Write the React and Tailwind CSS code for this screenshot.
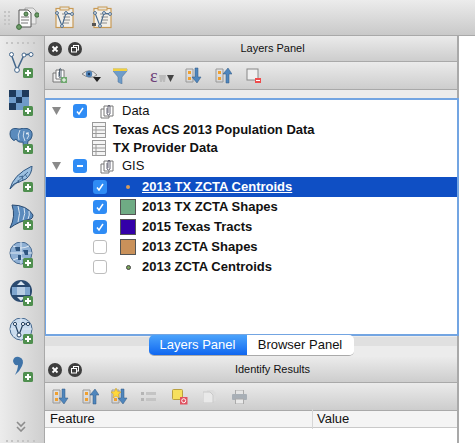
const font = "[font-family:'Liberation_Sans',Arial,sans-serif]";

const PlusBadge = () => (
  <g transform="translate(14 16)">
    <rect width="10" height="10" rx="1.5" fill="#4f8f4f" />
    <path d="M5 2v6M2 5h6" stroke="#fff" strokeWidth="2" />
  </g>
);

const DockIcon = ({ children }) => (
  <svg width="26" height="26" viewBox="0 0 26 26">
    {children}
    <PlusBadge />
  </svg>
);

const Globe = ({ fill = "#8fb0d4", dark = "#47698f" }) => (
  <>
    <circle cx="12" cy="11" r="11" fill={fill} stroke={dark} strokeWidth="1" />
    <path d="M1 11h22M12 0v22M4 4q8 4 16 0M4 18q8-4 16 0" stroke="#dce7f2" strokeWidth="1" fill="none" />
  </>
);

const DockIcons = () => (
  <div className="flex flex-col items-start gap-[12px] pt-[16px] pl-[9px]">
    <DockIcon>
      <path d="M2 2L8 18L15 3L22 2" stroke="#45688c" strokeWidth="1.5" fill="none" />
      <circle cx="2.5" cy="2.5" r="2" fill="#fff" stroke="#45688c" />
      <circle cx="8" cy="18" r="2.4" fill="#fff" stroke="#45688c" />
      <circle cx="15" cy="3" r="2" fill="#fff" stroke="#45688c" />
      <circle cx="22" cy="2.5" r="2" fill="#fff" stroke="#45688c" />
    </DockIcon>
    <DockIcon>
      <rect x="0" y="0" width="20" height="20" fill="#6f9bc9" />
      <path d="M0 0h7v7H0zM13 0h7v7h-7zM7 7h6v6H7zM0 13h7v7H0z" fill="#1e3a5c" />
    </DockIcon>
    <DockIcon>
      {/* elephant head, trunk hanging from the middle */}
      <path d="M1 6Q1 0 7 0.500Q9 1 11 1Q14-0.500 18 0.500Q24 2 23 8Q22.500 12 19 13L18 20Q16 23 14.500 20L14 14Q9 15 7 11Q5 14 3 11Q1 9 1 6Z" fill="#5b8bbd" stroke="#2f5680" />
      <path d="M11 2Q8 7 10 12M15 3Q13 8 16 13M19 4Q21 8 18 11" stroke="#dce7f2" strokeWidth="0.9" fill="none" />
      <circle cx="18" cy="5.500" r="0.900" fill="#fff" />
    </DockIcon>
    <DockIcon>
      <path d="M1 23Q4 9 23 0Q23 8 17 13Q10 16 5 18Q3 20 1 23Z" fill="#9cc0e0" stroke="#2f5680" />
      <path d="M1 23L19 6M9 14l1 3M13 10l1 4M16 8l2 3M10 11l4-1" stroke="#2f5680" strokeWidth="0.8" fill="none" />
    </DockIcon>
    <DockIcon>
      <path d="M3 1Q18 1 24 11Q24 14 22 15Q10 17 1 24Q7 12 3 1Z" fill="#5b8bbd" stroke="#2a4a70" />
      <path d="M9 2Q12 9 9 18M15 4Q17 9 14 16M20 7Q21 11 19 15" stroke="#dce7f2" fill="none" />
    </DockIcon>
    <DockIcon>
      <Globe />
      <path d="M6 5h5v4H7zM14 8h5v5h-3zM9 13h3v5H9z" fill="#2f5680" />
    </DockIcon>
    <DockIcon>
      <circle cx="12" cy="11" r="11" fill="#2a4a70" />
      <path d="M3 7h18v8H3z" fill="#7fa6cf" />
      <path d="M8 7h8v8H8z" fill="#b7cde4" />
      <path d="M12 1l4 4H8zM12 21l4-4H8z" fill="#dce7f2" />
    </DockIcon>
    <DockIcon>
      <Globe fill="#c9dbee" />
      <path d="M6 6L10 17L14 6L19 6" stroke="#24405f" strokeWidth="1.2" fill="none" />
      <circle cx="6" cy="6" r="1.6" fill="#fff" stroke="#24405f" />
      <circle cx="10" cy="17" r="2" fill="#fff" stroke="#24405f" />
      <circle cx="14" cy="6" r="1.6" fill="#fff" stroke="#24405f" />
      <circle cx="19" cy="6" r="1.6" fill="#fff" stroke="#24405f" />
    </DockIcon>
    <DockIcon>
      <path d="M4 5Q5 0 10 1Q16 3 13 10Q11 15 6 19Q9 13 9 9Q5 10 4 5Z" fill="#3f73a8" />
    </DockIcon>
    <svg className="mt-[27px] ml-[7px]" width="10" height="11" viewBox="0 0 10 11">
      <path d="M1 1l4 4 4-4M1 6l4 4 4-4" stroke="#8c8c8c" strokeWidth="1.6" fill="none" />
    </svg>
  </div>
);

const Grip = ({ className }) => (
  <div className={`grid grid-cols-6 gap-[2px] w-[30px] ${className}`}>
    {[0, 1, 2, 3, 4, 5].map((i) => (
      <span key={i} className="w-[2px] h-[2px] bg-[#c4c4c4]" />
    ))}
  </div>
);

const Clipboard = ({ broken }) => (
  <svg width="22" height="24" viewBox="0 0 22 24">
    <rect x="2" y="2.5" width="17" height="19" fill="#f2efe8" stroke="#c89a55" strokeWidth="1.2" />
    <rect x="6" y="1" width="9" height="3" fill="#e9e4d8" stroke="#c89a55" />
    <path d="M8 8h8M9 11h7M9 14h7M9 17h6" stroke="#777" strokeWidth="0.8" />
    <path d="M3 7L8 20L12 7L18 8" stroke="#45688c" strokeWidth="1.1" fill="none" />
    <circle cx="3" cy="7" r="1.4" fill="#fff" stroke="#45688c" />
    <circle cx="8" cy="20" r="1.4" fill="#fff" stroke="#45688c" />
    <circle cx="12" cy="7" r="1.4" fill="#fff" stroke="#45688c" />
    <circle cx="18" cy="8" r="1.4" fill="#fff" stroke="#45688c" />
    {broken && <path d="M0 17h4v3H0z" fill="#555" />}
  </svg>
);

const TopToolbar = () => (
  <div className="h-[36px] flex items-center border-b border-[#a9a9a9] bg-gradient-to-b from-[#ececec] to-[#c9c9c9]">
    <div className="grid grid-cols-2 gap-[2px] ml-[4px] mr-[3px] w-[6px]">
      {[0, 1, 2, 3, 4, 5, 6, 7].map((i) => (
        <span key={i} className="w-[2px] h-[2px] bg-[#c4c4c4]" />
      ))}
    </div>
    <svg className="ml-[2px]" width="24" height="24" viewBox="0 0 24 24">
      <path d="M10 2h8l3 3v13H10z" fill="#e8e8e8" stroke="#aaa" />
      <path d="M4 4h9l3 3v14H4z" fill="#fbfbfb" stroke="#555" />
      <path d="M6 11h8M6 14h8M6 17h7" stroke="#555" strokeWidth="0.8" />
      <circle cx="4" cy="21" r="2.4" fill="#6d9b67" stroke="#3d6b3d" />
      <circle cx="11" cy="8" r="2" fill="#6d9b67" stroke="#3d6b3d" />
      <circle cx="22" cy="9" r="2.2" fill="#6d9b67" stroke="#3d6b3d" />
    </svg>
    <div className="ml-[15px]"><Clipboard /></div>
    <div className="ml-[16px]"><Clipboard broken /></div>
  </div>
);

const RoundButton = ({ children }) => (
  <span className="w-[14px] h-[14px] rounded-full bg-[#3e3e3e] flex items-center justify-center">
    {children}
  </span>
);

const PanelHeader = ({ title, className }) => (
  <div className={`flex items-center border-b border-[#a9a9a9] bg-gradient-to-b from-[#ebebeb] to-[#cdcdcd] pl-[3px] gap-[6px] ${className}`}>
    <RoundButton>
      <svg width="8" height="8" viewBox="0 0 8 8">
        <path d="M1.5 1.5l5 5M6.5 1.5l-5 5" stroke="#fff" strokeWidth="1.8" />
      </svg>
    </RoundButton>
    <RoundButton>
      <svg width="8" height="8" viewBox="0 0 8 8">
        <rect x="2.5" y="0.5" width="5" height="4.5" fill="none" stroke="#fff" />
        <rect x="0.5" y="2.5" width="5" height="4.5" fill="#3e3e3e" stroke="#fff" />
      </svg>
    </RoundButton>
    <span className="flex-1 text-center text-[11px] text-[#111]">{title}</span>
  </div>
);

const ToolRow = ({ className, children }) => (
  <div className={`flex items-center border-b border-[#a9a9a9] bg-gradient-to-b from-[#ebebeb] to-[#cdcdcd] ${className}`}>
    {children}
  </div>
);

const ArrowBars = ({ up, star }) => (
  <svg width="17" height="17" viewBox="0 0 17 17">
    <path d="M1 2h7v13H1z" fill="none" stroke="#999" />
    <rect x="3" y="4" width="3" height="3" fill="#f0a030" />
    <rect x="3" y="10" width="3" height="3" fill="#f0a030" />
    {up ? (
      <path d="M11 16V7H8l5-6 4 6h-3v9z" fill="#4f86bd" stroke="#2f5680" strokeWidth="0.5" />
    ) : (
      <path d="M10 1v9H7l5 6 4-6h-3V1z" fill="#4f86bd" stroke="#2f5680" strokeWidth="0.5" />
    )}
    {star && <path d="M5 0l1.5 3.5L10 4 7.3 6.3 8 10 5 8 2 10l.7-3.700L0 4l3.500-.5z" fill="#ffd83a" stroke="#c89a20" strokeWidth="0.5" />}
  </svg>
);

const GroupIcon = () => (
  <svg width="15" height="15" viewBox="0 0 15 15">
    <path d="M1 5h8v9H1z" fill="#fff" stroke="#777" />
    <path d="M4 2h9v10H4z" fill="#fff" stroke="#777" />
    <path d="M7 4v6q1.5 2 3 0V2q-1-1.5-2 0v7" fill="none" stroke="#556" strokeWidth="0.9" />
  </svg>
);

const LayersToolbar = () => (
  <ToolRow className="h-[28px] pl-[7px]">
    <svg width="15" height="17" viewBox="0 0 15 17">
      <path d="M1 6h8v9H1z" fill="#eee" stroke="#777" />
      <path d="M4 3h8v9H4z" fill="#fff" stroke="#777" />
      <path d="M7 5v5q1.2 1 2 0V2q-1-1-1.5 0v7" fill="none" stroke="#456" strokeWidth="0.9" />
      <rect x="9" y="10" width="6" height="6" fill="#6fa86f" />
      <path d="M12 11v4M10 13h4" stroke="#fff" />
    </svg>
    <svg className="ml-[15px]" width="19" height="14" viewBox="0 0 19 14">
      <path d="M0 5Q8-2 15 6Q8 11 0 5Z" fill="#e6e6e6" stroke="#888" />
      <circle cx="7" cy="5" r="3.2" fill="#4f80b4" />
      <circle cx="7" cy="5" r="1.2" fill="#1e3a5c" />
      <path d="M11 8h8l-4 5z" fill="#222" />
    </svg>
    <svg className="ml-[12px]" width="15" height="16" viewBox="0 0 15 16">
      <path d="M0 1h14v2L9 9v7l-4-2V9L0 3z" fill="#6e9cc9" stroke="#4a6f94" strokeWidth="0.5" />
      <rect x="0" y="0.5" width="14" height="2.5" fill="#f1d040" />
    </svg>
    <span className="ml-[22px] w-[25px] flex items-center">
      <span className="text-[18px] leading-none text-[#6d3f78] font-['Liberation_Serif',serif]">ε</span>
      <svg className="mt-[5px]" width="16" height="8" viewBox="0 0 16 8">
        <path d="M1 1h7l-1 7H5L4.5 5 4 8H2z" fill="#bbb" />
        <path d="M9 1h7l-3.5 7z" fill="#444" />
      </svg>
    </span>
    <span className="ml-[10px]"><ArrowBars /></span>
    <span className="ml-[13px]"><ArrowBars up /></span>
    <svg className="ml-[14px]" width="15" height="15" viewBox="0 0 15 15">
      <rect x="1" y="1" width="11" height="11" fill="#efefef" stroke="#888" />
      <rect x="9" y="10" width="6" height="5" fill="#ee4c4c" />
      <path d="M10 12.5h4" stroke="#fff" />
    </svg>
  </ToolRow>
);

const Check = ({ on, mixed }) => {
  if (on || mixed) {
    return (
      <span className="w-[14px] h-[14px] rounded-[3px] bg-[#2f8cf5] flex items-center justify-center shrink-0">
        <svg width="10" height="10" viewBox="0 0 10 10">
          {mixed ? (
            <path d="M2 5h6" stroke="#fff" strokeWidth="2" />
          ) : (
            <path d="M2 5.5l2 2.5 4-6" stroke="#fff" strokeWidth="1.5" fill="none" />
          )}
        </svg>
      </span>
    );
  }
  return <span className="w-[14px] h-[14px] rounded-[3px] bg-white border border-[#bdbdbd] shrink-0" />;
};

const Triangle = () => (
  <svg className="shrink-0" width="9" height="8" viewBox="0 0 9 8">
    <path d="M0 0h9L4.5 8z" fill="#8a8a8a" />
  </svg>
);

const GroupRow = ({ name, mixed, className }) => (
  <div className={`flex items-center pl-[6px] text-[13px] text-[#111] ${className}`}>
    <Triangle />
    <span className="ml-[12px]"><Check on={!mixed} mixed={mixed} /></span>
    <span className="ml-[13px]"><GroupIcon /></span>
    <span className="ml-[7px]">{name}</span>
  </div>
);

const TableRow = ({ name, className }) => (
  <div className={`flex items-center pl-[46px] font-bold text-[13px] text-[#111] ${className}`}>
    <svg width="14" height="16" viewBox="0 0 14 16">
      <rect x="0.5" y="0.5" width="13" height="15" fill="#f4f4f4" stroke="#9a9a9a" />
      <path d="M0 4.5h14M0 8h14M0 11.5h14M4 4v12" stroke="#9a9a9a" />
    </svg>
    <span className="ml-[7px]">{name}</span>
  </div>
);

const LayerRow = ({ name, on, legend, selected }) => (
  <div className={`flex items-center pl-[47px] h-[20px] font-bold text-[13px] ${selected ? "bg-[#0f4fc4] text-white underline" : "text-[#111]"}`}>
    <Check on={on} />
    <span className="ml-[13px] w-[16px] flex items-center justify-center shrink-0">{legend}</span>
    <span className="ml-[6px]">{name}</span>
  </div>
);

const Swatch = ({ color }) => (
  <span className={`w-[16px] h-[16px] border border-[#555] ${color}`} />
);

const LayersTree = () => (
  <div className="-mr-[2px] h-[238px] pt-[2px] bg-white border-t-2 border-b-2 border-r-2 border-l border-[#73a5e2]">
    <GroupRow name="Data" className="h-[18px]" />
    <TableRow name="Texas ACS 2013 Population Data" className="h-[19px]" />
    <TableRow name="TX Provider Data" className="h-[18px]" />
    <GroupRow name="GIS" mixed className="h-[20px] pb-[2px]" />
    <LayerRow
      selected
      on
      name="2013 TX ZCTA Centroids"
      legend={<span className="w-[4px] h-[4px] rounded-full bg-[#d59a5c]" />}
    />
    <LayerRow on name="2013 TX ZCTA Shapes" legend={<Swatch color="bg-[#6fab84]" />} />
    <LayerRow on name="2015 Texas Tracts" legend={<Swatch color="bg-[#3300a8]" />} />
    <LayerRow name="2013 ZCTA Shapes" legend={<Swatch color="bg-[#c9915a]" />} />
    <LayerRow
      name="2013 ZCTA Centroids"
      legend={<span className="w-[5px] h-[5px] rounded-full bg-[#7aa35a] border border-[#444]" />}
    />
  </div>
);

const PanelTabs = () => (
  <div className="h-[21px] relative flex justify-center bg-[#ececec]">
    <div className="absolute left-0 right-0 top-[1px] h-[9px] bg-[#e0e0e0]" />
    <div className="relative flex h-[21px] -mt-[1px] text-[13px] rounded-[5px] overflow-hidden border-b border-[#aaa]">
      <span className="w-[98px] flex items-center justify-center bg-gradient-to-b from-[#4ba3fb] to-[#0f66f0] text-white">Layers Panel</span>
      <span className="w-[107px] flex items-center justify-center bg-white text-[#111]">Browser Panel</span>
    </div>
  </div>
);

const IdentifyToolbar = () => (
  <ToolRow className="h-[28px] pl-[7px]">
    <ArrowBars />
    <span className="ml-[13px]"><ArrowBars up /></span>
    <span className="ml-[12px]"><ArrowBars star /></span>
    <svg className="ml-[13px]" width="15" height="11" viewBox="0 0 15 11">
      <path d="M0 1h3v3H0zM0 7h3v3H0z" fill="#b5b5b5" />
      <path d="M5 1h10v3H5zM5 7h10v3H5z" fill="#c4c4c4" />
    </svg>
    <svg className="ml-[16px]" width="16" height="16" viewBox="0 0 16 16">
      <rect x="0.5" y="0.5" width="10" height="10" rx="1" fill="#f6e05e" stroke="#b9a040" />
      <rect x="8" y="8" width="7.5" height="7.5" fill="#e05260" />
      <circle cx="11.7" cy="11.7" r="2" fill="none" stroke="#fff" />
    </svg>
    <svg className="ml-[15px]" width="13" height="13" viewBox="0 0 13 13">
      <path d="M4 0h6l3 3v8H4z" fill="#dcdcdc" />
      <path d="M0 2h7l3 3v8H0z" fill="#e9e9e9" stroke="#c9c9c9" />
    </svg>
    <svg className="ml-[16px]" width="15" height="14" viewBox="0 0 15 14">
      <rect x="3.5" y="0" width="8" height="5" fill="#e4e4e4" stroke="#aaa" />
      <rect x="0" y="4" width="15" height="6" rx="1" fill="#a8afb6" />
      <rect x="3.5" y="9" width="8" height="5" fill="#e9e9e9" stroke="#aaa" />
    </svg>
  </ToolRow>
);

const ResultsTable = () => (
  <div className="flex-1 bg-white">
    <div className="h-[17px] flex items-center bg-[#f4f4f4] border-b border-[#c9c9c9] text-[13px] text-[#111]">
      <span className="w-[268px] pl-[5px] border-r border-[#d6d6d6]">Feature</span>
      <span className="pl-[4px]">Value</span>
    </div>
  </div>
);

export default function App() {
  return (
    <div className={`w-[475px] h-[443px] overflow-hidden flex flex-col bg-white ${font}`}>
      <TopToolbar />
      <div className="flex flex-1 min-h-0">
        <div className="w-[45px] shrink-0 border-r border-[#a9a9a9] bg-gradient-to-r from-[#ececec] to-[#cfcfcf] relative">
          <Grip className="absolute left-[6px] top-[6px]" />
          <DockIcons />
          <Grip className="absolute left-[6px] bottom-[1px]" />
        </div>
        <div className="w-[414px] shrink-0 flex flex-col border-r-2 border-[#a9a9a9] bg-[#ececec]">
          <PanelHeader title="Layers Panel" className="h-[26px]" />
          <LayersToolbar />
          <div className="h-[8px]" />
          <LayersTree />
          <PanelTabs />
          <PanelHeader title="Identify Results" className="h-[26px]" />
          <IdentifyToolbar />
          <ResultsTable />
        </div>
      </div>
    </div>
  );
}
